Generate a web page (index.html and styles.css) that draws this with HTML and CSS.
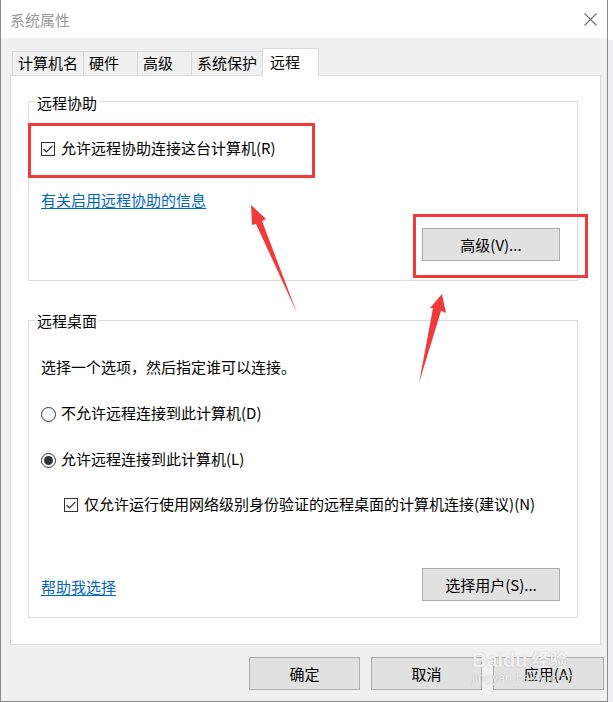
FILE: index.html
```html
<!DOCTYPE html>
<html lang="zh-CN">
<head>
<meta charset="utf-8">
<title>系统属性</title>
<link rel="stylesheet" href="styles.css">
</head>
<body>
<div class="window">
  <div class="titlebar">
    <span class="title">系统属性</span>
    <svg class="close" width="13" height="13" viewBox="0 0 13 13"><path d="M0.5 0.5 L12.5 12.5 M12.5 0.5 L0.5 12.5" stroke="#6f6f6f" stroke-width="1.1" fill="none"/></svg>
  </div>
  <div class="content">
    <div class="tabs">
      <div class="tab wide">计算机名</div>
      <div class="tab">硬件</div>
      <div class="tab">高级</div>
      <div class="tab wide">系统保护</div>
      <div class="tab active">远程</div>
    </div>
    <div class="panel">
      <div class="group g1">
        <div class="legend">远程协助</div>
        <div class="option first">
          <svg class="box" width="14" height="14" viewBox="0 0 14 14"><rect x="0.5" y="0.5" width="13" height="13" fill="#fff" stroke="#333"/><path d="M2.6 7.2 L5.5 10 L11.4 3.8" stroke="#333" stroke-width="1.2" fill="none"/></svg>
          <span>允许远程协助连接这台计算机(R)</span>
        </div>
        <a class="link info" href="#">有关启用远程协助的信息</a>
        <div class="btnrow"><button class="btn">高级(V)...</button></div>
      </div>
      <div class="group g2">
        <div class="legend">远程桌面</div>
        <div class="desc">选择一个选项，然后指定谁可以连接。</div>
        <div class="option radio1">
          <span class="radio"></span>
          <span>不允许远程连接到此计算机(D)</span>
        </div>
        <div class="option radio2">
          <span class="radio on"></span>
          <span>允许远程连接到此计算机(L)</span>
        </div>
        <div class="option nla">
          <svg class="box" width="14" height="14" viewBox="0 0 14 14"><rect x="0.5" y="0.5" width="13" height="13" fill="#fff" stroke="#333"/><path d="M2.6 7.2 L5.5 10 L11.4 3.8" stroke="#333" stroke-width="1.2" fill="none"/></svg>
          <span>仅允许运行使用网络级别身份验证的远程桌面的计算机连接(建议)(N)</span>
        </div>
        <div class="bottomrow">
          <a class="link help" href="#">帮助我选择</a>
          <button class="btn">选择用户(S)...</button>
        </div>
      </div>
    </div>
    <div class="footer">
      <button class="btn foot">确定</button>
      <button class="btn foot">取消</button>
      <button class="btn foot">应用(A)</button>
    </div>
  </div>
</div>
<div class="edge"></div>

<svg class="annot" width="613" height="702" viewBox="0 0 613 702">
  <rect x="29.5" y="124.5" width="284" height="52" fill="none" stroke="#f23a3a" stroke-width="3"/>
  <rect x="414.5" y="215.5" width="172" height="61" fill="none" stroke="#f23a3a" stroke-width="3"/>
  <polygon points="251,205 266,219 262,221 297,313 256,224 252,225" fill="#f23a3a"/>
  <polygon points="442,294 446,313 441,311 419,383 433,308 430,308" fill="#f23a3a"/>
</svg>

<div class="watermark">
  <div class="wm-top"><span>Baidu</span><span class="wm-cn">经验</span></div>
  <div class="wm-url">jingyan.baidu.com</div>
</div>
</body>
</html>
```

FILE: styles.css
```css
* { box-sizing: border-box; }

html, body {
  margin: 0;
  padding: 0;
}

body {
  width: 613px;
  height: 702px;
  background: #f4f4f4;
  font-family: "Noto Sans CJK SC", "Noto Sans", sans-serif;
  font-size: 15px;
  line-height: 20px;
  color: #000;
  display: flex;
  overflow: hidden;
}

.window {
  width: 608px;
  height: 702px;
  background: #f0f0f0;
  border-left: 1px solid #8c8c8c;
  border-right: 1px solid #8c8c8c;
  border-bottom: 1px solid #8c8c8c;
  display: flex;
  flex-direction: column;
}

.edge {
  flex: 1;
  background: linear-gradient(#ffffff 0 40px, #eef0f3 40px);
}

.titlebar {
  height: 38px;
  background: #fff;
  display: flex;
  align-items: center;
  justify-content: space-between;
  padding: 1px 10px 0 9px;
}

.title {
  color: #9a9a9a;
  font-size: 15px;
}

.close {
  display: block;
  margin-top: -1px;
}

.content {
  padding: 0 6px 0 9px;
  display: flex;
  flex-direction: column;
}

.tabs {
  margin-top: 10px;
  padding-left: 2px;
  display: flex;
  align-items: flex-end;
  height: 28px;
  margin-bottom: -1px;
  position: relative;
  z-index: 1;
}

.tab {
  width: 55px;
  height: 25px;
  border: 1px solid #d9d9d9;
  margin-right: -1px;
  padding: 0 0 0 5px;
  line-height: 22px;
  background: #f0f0f0;
  white-space: nowrap;
}

.tab.wide {
  width: 72px;
}

.tab.active {
  width: 57px;
  height: 28px;
  background: #fff;
  border-bottom: 1px solid #fff;
  padding-left: 7px;
  line-height: 25px;
  position: relative;
  z-index: 2;
}

.panel {
  height: 570px;
  background: #fff;
  border: 1px solid #d9d9d9;
  padding: 25px 0 0 17px;
}

.group {
  width: 550px;
  border: 1px solid #dcdcdc;
  padding: 0 17px 0 12px;
  display: flex;
  flex-direction: column;
  align-items: flex-start;
}

.g1 { height: 180px; }
.g2 { height: 298px; margin-top: 39px; }

.legend {
  background: #fff;
  margin-left: -6px;
  padding: 0 2px;
  height: 20px;
}

.g1 .legend { margin-top: -9px; }
.g2 .legend { margin-top: -10px; }

.option {
  display: flex;
  align-items: center;
  gap: 6px;
  height: 20px;
  white-space: nowrap;
}

.option .box { display: block; flex: none; margin-top: 1px; }

.option.first { margin-top: 25px; }
.radio1 { margin-top: 26px; }
.radio2 { margin-top: 26px; }
.nla { margin-top: 25px; margin-left: 23px; }

.radio {
  width: 15px;
  height: 15px;
  border: 1px solid #333;
  border-radius: 50%;
  background: #fff;
  display: flex;
  align-items: center;
  justify-content: center;
  flex: none;
  margin-top: 2px;
  margin-right: -1px;
}

.radio.on::after {
  content: "";
  width: 9px;
  height: 9px;
  border-radius: 50%;
  background: #333;
}

.desc { margin-top: 26px; height: 20px; }

.link {
  color: #0066cc;
  text-decoration: underline;
  text-underline-offset: 2px;
  height: 20px;
  white-space: nowrap;
}

.info { margin-top: 32px; }

.btnrow {
  align-self: stretch;
  display: flex;
  justify-content: flex-end;
  margin-top: 18px;
}

.btn {
  font-family: inherit;
  font-size: 15px;
  line-height: 20px;
  color: #000;
  background: #e1e1e1;
  border: 1px solid #adadad;
  border-radius: 0;
  width: 138px;
  height: 33px;
  padding: 0;
  margin: 0;
}

.bottomrow {
  align-self: stretch;
  margin-top: 54px;
  display: flex;
  justify-content: space-between;
  align-items: flex-end;
}

.help { margin-bottom: 4px; }

.footer {
  margin-top: 12px;
  margin-right: -3px;
  display: flex;
  justify-content: flex-end;
  gap: 11px;
}

.btn.foot { width: 111px; }

.annot {
  position: absolute;
  left: 0;
  top: 0;
  pointer-events: none;
}

.watermark {
  position: absolute;
  left: 472px;
  top: 648px;
  width: 112px;
  pointer-events: none;
  color: rgba(255, 255, 255, 0.85);
  text-shadow: 0 0 1px rgba(0, 0, 0, 0.3);
  font-family: "Liberation Sans", "Noto Sans CJK SC", sans-serif;
}

.wm-top {
  display: flex;
  align-items: baseline;
  font-size: 20px;
  line-height: 22px;
  font-weight: bold;
}

.wm-cn {
  font-family: "Noto Sans CJK SC", sans-serif;
  font-size: 18px;
  margin-left: 4px;
}

.wm-url {
  font-size: 12px;
  line-height: 14px;
  letter-spacing: 0.3px;
}
```
